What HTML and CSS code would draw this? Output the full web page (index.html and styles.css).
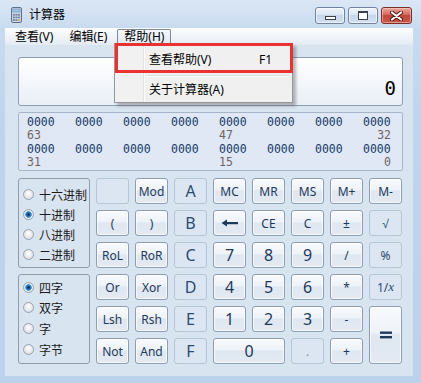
FILE: index.html
```html
<!DOCTYPE html>
<html lang="zh-CN">
<head>
    <meta charset="UTF-8">
    <title>计算器</title>
    <link rel="stylesheet" href="styles.css">
</head>
<body>
<div class="window">

    <div class="titlebar">
        <svg class="appicon" width="11" height="16" viewBox="0 0 11 16">
            <rect x="0.5" y="0.5" width="10" height="15" rx="1.5" fill="#c9d5e3" stroke="#5f7089"/>
            <rect x="2" y="2" width="7" height="3" fill="#9fc4ea" stroke="#6d8fb5" stroke-width="0.6"/>
            <rect x="2" y="7" width="2" height="1.6" fill="#6f819b"/>
            <rect x="4.5" y="7" width="2" height="1.6" fill="#6f819b"/>
            <rect x="7" y="7" width="2" height="1.6" fill="#6f819b"/>
            <rect x="2" y="9.6" width="2" height="1.6" fill="#6f819b"/>
            <rect x="4.5" y="9.6" width="2" height="1.6" fill="#6f819b"/>
            <rect x="7" y="9.6" width="2" height="1.6" fill="#6f819b"/>
            <rect x="2" y="12.2" width="2" height="1.6" fill="#6f819b"/>
            <rect x="4.5" y="12.2" width="2" height="1.6" fill="#6f819b"/>
            <rect x="7" y="12.2" width="2" height="1.6" fill="#e8a04a"/>
        </svg>
        <span class="title">计算器</span>
        <div class="caption">
            <button class="cap"><span class="ico-min"></span></button>
            <button class="cap"><span class="ico-max"></span></button>
            <button class="cap close">
                <svg width="13" height="10" viewBox="0 0 13 10">
                    <path d="M2 1.5 L11 8.5 M11 1.5 L2 8.5" stroke="#4a1512" stroke-width="4" stroke-linecap="round"/>
                    <path d="M2 1.5 L11 8.5 M11 1.5 L2 8.5" stroke="#ffffff" stroke-width="2.2" stroke-linecap="round"/>
                </svg>
            </button>
        </div>
    </div>

    <div class="client">
        <nav class="menubar">
            <span class="menu">查看(V)</span>
            <span class="menu">编辑(E)</span>
            <span class="menu open">帮助(H)</span>
        </nav>

        <main class="body">
            <div class="display">0</div>

            <div class="bits">
                <div class="bitrow">
                    <span>0000</span><span>0000</span><span>0000</span><span>0000</span>
                    <span>0000</span><span>0000</span><span>0000</span><span>0000</span>
                </div>
                <div class="bitrow lbl">
                    <span class="c1">63</span><span class="c5">47</span><span class="c8">32</span>
                </div>
                <div class="bitrow">
                    <span>0000</span><span>0000</span><span>0000</span><span>0000</span>
                    <span>0000</span><span>0000</span><span>0000</span><span>0000</span>
                </div>
                <div class="bitrow lbl">
                    <span class="c1">31</span><span class="c5">15</span><span class="c8">0</span>
                </div>
            </div>

            <div class="keypad">
                <div class="radios top">
                    <label class="radio"><i></i>十六进制</label>
                    <label class="radio on"><i></i>十进制</label>
                    <label class="radio"><i></i>八进制</label>
                    <label class="radio"><i></i>二进制</label>
                </div>
                <div class="radios bottom">
                    <label class="radio on"><i></i>四字</label>
                    <label class="radio"><i></i>双字</label>
                    <label class="radio"><i></i>字</label>
                    <label class="radio"><i></i>字节</label>
                </div>

                <button class="key off"></button>
                <button class="key">Mod</button>
                <button class="key off big">A</button>
                <button class="key">MC</button>
                <button class="key">MR</button>
                <button class="key">MS</button>
                <button class="key">M+</button>
                <button class="key">M-</button>

                <button class="key">(</button>
                <button class="key">)</button>
                <button class="key off big">B</button>
                <button class="key">
                    <svg width="17" height="8" viewBox="0 0 17 8">
                        <path d="M0.5 4 L6 0.5 L6 7.5 Z" fill="#1e395b"/>
                        <rect x="5" y="3" width="12" height="2.2" fill="#1e395b"/>
                    </svg>
                </button>
                <button class="key">CE</button>
                <button class="key">C</button>
                <button class="key">±</button>
                <button class="key off">√</button>

                <button class="key">RoL</button>
                <button class="key">RoR</button>
                <button class="key off big">C</button>
                <button class="key big">7</button>
                <button class="key big">8</button>
                <button class="key big">9</button>
                <button class="key">/</button>
                <button class="key off">%</button>

                <button class="key">Or</button>
                <button class="key">Xor</button>
                <button class="key off big">D</button>
                <button class="key big">4</button>
                <button class="key big">5</button>
                <button class="key big">6</button>
                <button class="key">*</button>
                <button class="key off">1/<em>x</em></button>

                <button class="key">Lsh</button>
                <button class="key">Rsh</button>
                <button class="key off big">E</button>
                <button class="key big">1</button>
                <button class="key big">2</button>
                <button class="key big">3</button>
                <button class="key">-</button>
                <button class="key equals">
                    <svg width="12" height="8" viewBox="0 0 12 8">
                        <rect x="0" y="0.5" width="12" height="2.4" fill="#1e395b"/>
                        <rect x="0" y="5" width="12" height="2.4" fill="#1e395b"/>
                    </svg>
                </button>

                <button class="key">Not</button>
                <button class="key">And</button>
                <button class="key off big">F</button>
                <button class="key big zero">0</button>
                <button class="key off dot">.</button>
                <button class="key">+</button>
            </div>
        </main>
    </div>

    <div class="dropdown">
        <div class="item"><span class="label">查看帮助(V)</span><span class="short">F1</span></div>
        <div class="sep"></div>
        <div class="item"><span class="label">关于计算器(A)</span></div>
    </div>
    <div class="callout"></div>

</div>
</body>
</html>
```

FILE: styles.css
```css
*{
    box-sizing: border-box;
}

body{
    margin: 0;
    width: 421px;
    height: 383px;
    overflow: hidden;
    font-family: "Noto Sans", "Noto Sans CJK SC", sans-serif;
    color: #000;
}

.window{
    position: relative;
    width: 421px;
    height: 383px;
    display: flex;
    flex-direction: column;
    background: linear-gradient(#dbe7f5, #c9dbf0 28px, #bfd4ed 120px, #bcd2ec);
}

/* title bar */

.titlebar{
    height: 28px;
    display: flex;
    align-items: flex-start;
    padding-left: 11px;
}

.appicon{
    margin-top: 7px;
}

.title{
    margin-left: 7px;
    margin-top: 6px;
    font-size: 12px;
    line-height: 18px;
}

.caption{
    margin-left: auto;
    margin-right: 9px;
    margin-top: 7px;
    display: flex;
    gap: 3px;
}

.cap{
    width: 30px;
    height: 17px;
    padding: 0;
    border: 1px solid #71839e;
    border-radius: 3px;
    background: linear-gradient(#eef4fb, #dbe6f3 45%, #c7d7ec 50%, #d3e0f1);
    display: flex;
    align-items: center;
    justify-content: center;
    box-shadow: inset 0 0 0 1px rgba(255, 255, 255, 0.6);
}

.cap.close{
    width: 31px;
    border-color: #7a2f2a;
    background: linear-gradient(#e9a89d, #d5695b 45%, #c2463a 50%, #c9584a);
    box-shadow: inset 0 0 0 1px rgba(255, 220, 210, 0.5);
}

.ico-min{
    width: 11px;
    height: 4px;
    margin-top: 5px;
    border: 1px solid #3a3f48;
    background: #fff;
}

.ico-max{
    width: 10px;
    height: 9px;
    border: 1px solid #3a3f48;
    border-top-width: 2px;
    background: #fff;
}

/* client */

.client{
    flex: 1;
    margin: 0 8px 7px 5px;
    background: #d9e4f1;
    display: flex;
    flex-direction: column;
}

.menubar{
    height: 17px;
    display: flex;
    padding-left: 2px;
    font-size: 12px;
    line-height: 15px;
    background: linear-gradient(#fcfdfe, #eef3f9 60%, #e3eaf4);
}

.menu{
    padding: 0 7px;
    height: 15px;
    border: 1px solid transparent;
    line-height: 13px;
    margin-top: 1px;
}

.menu.open{
    border-color: #7c8797;
    border-bottom: 0;
    border-radius: 2px 2px 0 0;
    background: linear-gradient(#f4f7fb, #e3e9f1);
    padding: 0 6px;
    margin-left: 2px;
}

.body{
    padding: 12px 0 0 13px;
}

.display{
    width: 385px;
    height: 49px;
    border: 1px solid #8e9fb5;
    border-radius: 3px;
    background: linear-gradient(#ffffff, #f4f7fb 50%, #e9eff7);
    text-align: right;
    padding: 19px 6px 0 0;
    font-family: "DejaVu Sans Mono", monospace;
    font-size: 19px;
    line-height: 22px;
}

.bits{
    margin-top: 6px;
    width: 385px;
    height: 59px;
    border: 1px solid #a7b6c9;
    border-radius: 2px;
    background: #dfe8f4;
    padding: 3px 0 0 8px;
    font-family: "DejaVu Sans Mono", monospace;
    font-size: 11.5px;
}

.bitrow{
    display: grid;
    grid-template-columns: repeat(8, 28px);
    column-gap: 20px;
    height: 13.4px;
    line-height: 13px;
    color: #163a6c;
}

.bitrow.lbl{
    color: #6e6462;
}

.c1{ grid-column: 1; }
.c5{ grid-column: 5; }
.c8{ grid-column: 8; text-align: right; }

/* keypad */

.keypad{
    margin-top: 7px;
    display: grid;
    grid-template-columns: 72px repeat(8, 33px);
    grid-template-rows: repeat(6, 26px);
    column-gap: 6px;
    row-gap: 6px;
}

.radios{
    grid-column: 1;
    border: 1px solid #8f9cad;
    border-radius: 3px;
    display: flex;
    flex-direction: column;
    padding: 5px 0 0 4px;
    font-size: 12px;
}

.radios.top{
    grid-row: 1 / 4;
}

.radios.bottom{
    grid-row: 4 / 7;
    padding-top: 2px;
}

.radio{
    height: 20px;
    display: flex;
    align-items: center;
    gap: 5px;
    font-family: "Noto Sans CJK SC", sans-serif;
    color: #1a1a1a;
}

.radios.bottom .radio{
    height: 20.6px;
}

.radio i{
    width: 11px;
    height: 11px;
    border-radius: 50%;
    border: 1px solid #9aa3ad;
    background: radial-gradient(circle at 50% 40%, #ffffff, #e3e6ea 60%, #c9ced5);
}

.radio.on i{
    background: radial-gradient(circle, #0d2240 0, #1d5a9a 1.5px, #4aa0e0 3px, #e8eef4 3.6px, #d3d8de);
}

.key{
    padding: 0;
    border: 1px solid #8d9db3;
    border-radius: 3px;
    background: linear-gradient(#f8fafd, #eef3f9 45%, #dfe7f1 50%, #e3eaf3);
    box-shadow: inset 0 0 0 1px rgba(255, 255, 255, 0.7);
    color: #1e395b;
    font-family: "Noto Sans", sans-serif;
    font-size: 12px;
    display: flex;
    align-items: center;
    justify-content: center;
}

.key.big{
    font-size: 16px;
}

.key.off{
    background: #dce6f2;
    border-color: #b5c4d6;
    box-shadow: none;
    color: #2b4a70;
}

.key.dot{
    color: #7f92aa;
}

.key em{
    font-family: "Liberation Serif", serif;
    font-size: 13px;
}

.key.zero{
    grid-column: span 2;
}

.key.equals{
    grid-row: span 2;
}

/* help menu */

.dropdown{
    position: absolute;
    left: 114px;
    top: 43px;
    width: 179px;
    height: 60px;
    border: 1px solid #979797;
    background: linear-gradient(90deg, #f1f1f1 28px, #e2e3e3 28px, #e2e3e3 29px, #ffffff 29px, #ffffff 30px, #f0f0f0 30px);
    box-shadow: 3px 3px 3px rgba(0, 0, 0, 0.28);
    padding: 2px 2px 0 2px;
    font-size: 12px;
}

.item{
    height: 26px;
    display: flex;
    align-items: center;
    padding-left: 32px;
    font-family: "Noto Sans", "Noto Sans CJK SC", sans-serif;
}

.item .label{
    width: 110px;
}

.sep{
    height: 2px;
    margin: 3px 1px 1px 30px;
    border-top: 1px solid #e0e0e0;
    border-bottom: 1px solid #ffffff;
}

.item + .sep + .item{
    height: 22px;
}

.callout{
    position: absolute;
    left: 115px;
    top: 43px;
    width: 178px;
    height: 30px;
    border: 3px solid #ea3330;
}
```
